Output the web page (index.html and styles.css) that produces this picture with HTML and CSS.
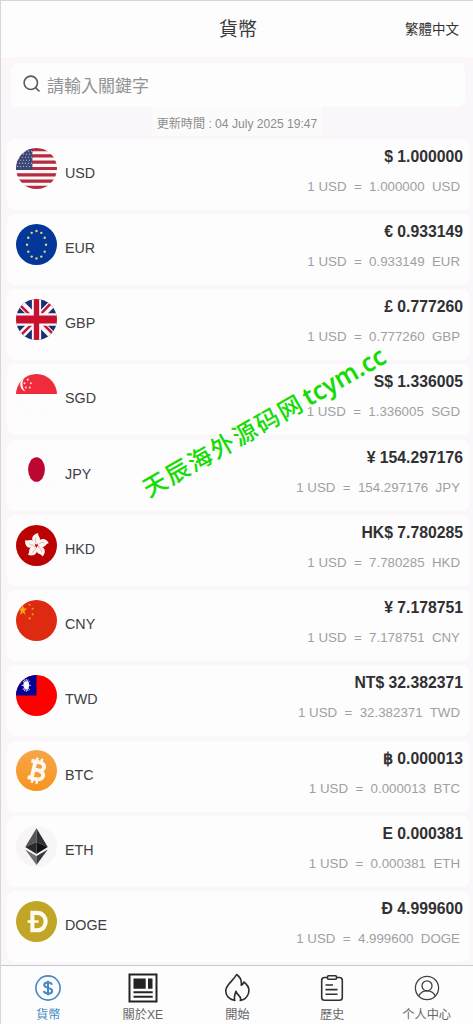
FILE: index.html
```html
<!DOCTYPE html>
<html lang="zh-Hant">
<head>
<meta charset="utf-8">
<title>貨幣</title>
<link rel="stylesheet" href="styles.css">
</head>
<body>
<div class="app">
  <header class="header"><span></span><h1 class="title">貨幣</h1><span class="lang">繁體中文</span></header>
  <main class="content">
    <div class="search">
      <svg class="search-icon" viewBox="0 0 18 18" fill="none" stroke="#5a5a5e" stroke-width="1.6"><circle cx="7.8" cy="7.8" r="6.7"/><path d="M12.5 12.7l4 3.8"/></svg>
      <span>請輸入關鍵字</span>
    </div>
    <div class="updated"><span>更新時間 : 04 July 2025 19:47</span></div>
    <div class="list">
      <div class="card">
        <svg class="flag" viewBox="0 0 40 40"><path fill="#fbf5f6" d="M0 0h40v40H0z"/><path stroke="#b32c42" stroke-width="3.08" d="M0 1.54h40M0 7.7h40M0 13.85h40M0 20h40M0 26.15h40M0 32.3h40M0 38.46h40"/><path fill="#3c4777" d="M0 0h16v21.5H0z"/><path stroke="#aab2cf" stroke-width="1.1" stroke-dasharray="1.1 1.8" d="M0 3h16M1 6h15M0 9h16M1 12h15M0 15h16M1 18h15"/></svg>
        <span class="code">USD</span>
        <div class="rate"><b>$ 1.000000</b><small>1 USD&nbsp; =&nbsp; 1.000000&nbsp; USD</small></div>
      </div>
      <div class="card">
        <svg class="flag" viewBox="0 0 40 40"><path fill="#033799" d="M0 0h40v40H0z"/><g fill="#e6dc72"><circle cx="20" cy="6.8" r="1.15"/><circle cx="24.7" cy="8.6" r="1.15"/><circle cx="28" cy="13.4" r="1.15"/><circle cx="29.3" cy="20.2" r="1.15"/><circle cx="28" cy="27" r="1.15"/><circle cx="24.7" cy="31.8" r="1.15"/><circle cx="20" cy="33.6" r="1.15"/><circle cx="15.3" cy="31.8" r="1.15"/><circle cx="12" cy="27" r="1.15"/><circle cx="10.8" cy="20.2" r="1.15"/><circle cx="12" cy="13.4" r="1.15"/><circle cx="15.3" cy="8.6" r="1.15"/></g></svg>
        <span class="code">EUR</span>
        <div class="rate"><b>€ 0.933149</b><small>1 USD&nbsp; =&nbsp; 0.933149&nbsp; EUR</small></div>
      </div>
      <div class="card">
        <svg class="flag" viewBox="0 0 40 40"><path fill="#17306f" d="M0 0h40v40H0z"/><path stroke="#fcf8fa" stroke-width="7.4" d="M0 0l40 40M40 0L0 40"/><path stroke="#c8163a" stroke-width="2.5" d="M-1 1l18 18M23 21l18 18M39-1L22 17M18 22L0 40"/><path stroke="#fcf8fa" stroke-width="9" d="M20 0v40"/><path stroke="#fcf8fa" stroke-width="12" d="M0 20h40"/><path stroke="#c8102e" stroke-width="5.2" d="M20 0v40"/><path stroke="#c8102e" stroke-width="7.6" d="M0 20h40"/></svg>
        <span class="code">GBP</span>
        <div class="rate"><b>£ 0.777260</b><small>1 USD&nbsp; =&nbsp; 0.777260&nbsp; GBP</small></div>
      </div>
      <div class="card">
        <svg class="flag flag-light" viewBox="0 0 40 40"><path fill="#fdfdfd" d="M0 0h40v40H0z"/><path fill="#ef2c3c" d="M0 0h40v19.6H0z"/><path fill="#fdf5f6" d="M8.500 3.500C2.500 6 2.500 15.500 9.500 17C5.500 14 5.500 7 8.500 3.500z"/><g fill="#fbd5d9"><circle cx="11.500" cy="5.500" r="1"/><circle cx="8.400" cy="9" r="1"/><circle cx="14.500" cy="9" r="1"/><circle cx="9.600" cy="13.200" r="1"/><circle cx="13.500" cy="13.200" r="1"/></g></svg>
        <span class="code">SGD</span>
        <div class="rate"><b>S$ 1.336005</b><small>1 USD&nbsp; =&nbsp; 1.336005&nbsp; SGD</small></div>
      </div>
      <div class="card">
        <svg class="flag flag-light" viewBox="0 0 40 40"><path fill="#fdfdfd" d="M0 0h40v40H0z"/><ellipse cx="20" cy="20" rx="8.2" ry="12" fill="#bc0830"/></svg>
        <span class="code">JPY</span>
        <div class="rate"><b>¥ 154.297176</b><small>1 USD&nbsp; =&nbsp; 154.297176&nbsp; JPY</small></div>
      </div>
      <div class="card">
        <svg class="flag" viewBox="0 0 40 40"><defs><g id="petal"><path fill="#fdf5f4" d="M20 19C13.500 16 14.800 9 21.800 7.800C20.400 10 25 12.600 23 16C22.100 17.600 20.800 18 20 19z"/><path d="M19.700 17.500C18.400 15.500 18.600 13.500 19.600 12" fill="none" stroke="#d98078" stroke-width=".5"/></g></defs><path fill="#ba0202" d="M0 0h40v40H0z"/><use href="#petal"/><use href="#petal" transform="rotate(72 20 20)"/><use href="#petal" transform="rotate(144 20 20)"/><use href="#petal" transform="rotate(216 20 20)"/><use href="#petal" transform="rotate(288 20 20)"/></svg>
        <span class="code">HKD</span>
        <div class="rate"><b>HK$ 7.780285</b><small>1 USD&nbsp; =&nbsp; 7.780285&nbsp; HKD</small></div>
      </div>
      <div class="card">
        <svg class="flag" viewBox="0 0 40 40"><path fill="#de2a10" d="M0 0h40v40H0z"/><path fill="#f8a51b" d="M6.600 4.500l1.100 3.800h3l-2.400 2.400 1 4-2.700-2.400-2.800 2.400 1-4-2.400-2.400h3.100z"/><g fill="#eda01a"><circle cx="13.300" cy="4.600" r="1"/><circle cx="16.200" cy="8.600" r="1"/><circle cx="16.200" cy="14" r="1"/><circle cx="13.300" cy="18" r="1.100"/></g></svg>
        <span class="code">CNY</span>
        <div class="rate"><b>¥ 7.178751</b><small>1 USD&nbsp; =&nbsp; 7.178751&nbsp; CNY</small></div>
      </div>
      <div class="card">
        <svg class="flag" viewBox="0 0 40 40"><path fill="#fe0000" d="M0 0h40v40H0z"/><path fill="#000094" d="M0 0h20v20H0z"/><path stroke="#dde" stroke-width=".9" d="M10 3.800v12.600M5.400 10h9.200M6.700 5.700l6.600 8.800M13.300 5.700l-6.600 8.800M8.200 4.400l3.600 11.300M11.800 4.400L8.200 15.700"/><ellipse cx="10" cy="10" rx="2.800" ry="3.600" fill="#fff"/></svg>
        <span class="code">TWD</span>
        <div class="rate"><b>NT$ 32.382371</b><small>1 USD&nbsp; =&nbsp; 32.382371&nbsp; TWD</small></div>
      </div>
      <div class="card">
        <svg class="flag" viewBox="0 0 40 40"><defs><linearGradient id="gold" x2="0" y2="1"><stop stop-color="#f6a64a"/><stop offset="1" stop-color="#f7941d"/></linearGradient></defs><path fill="url(#gold)" d="M0 0h40v40H0z"/><g transform="rotate(13 20 20)" fill="none" stroke="#fff8f2"><path stroke-width="3.800" d="M13 11.700h8.800c6.200 0 6.200 7.800 0 7.800H17M21.500 19.500c8 0 8 8.800 0 8.800H13M17 12v16"/><path stroke-width="2.400" d="M18.200 7.500V12M22.800 7.500V12M18.200 28v4.700M22.800 28v4.700"/></g></svg>
        <span class="code">BTC</span>
        <div class="rate"><b>฿ 0.000013</b><small>1 USD&nbsp; =&nbsp; 0.000013&nbsp; BTC</small></div>
      </div>
      <div class="card">
        <svg class="flag" viewBox="0 0 40 40"><path fill="#f8f5f7" d="M0 0h40v40H0z"/><path fill="#56565a" d="M20 2.200L9 20.600l11-5z"/><path fill="#303033" d="M20 2.200l11 18.400-11-5z"/><path fill="#29292c" d="M9 20.600l11-5v11.600z"/><path fill="#111114" d="M31 20.600l-11-5v11.600z"/><path fill="#707074" d="M9 23l11 6.200V38z"/><path fill="#39393d" d="M31 23l-11 6.200V38z"/></svg>
        <span class="code">ETH</span>
        <div class="rate"><b>E 0.000381</b><small>1 USD&nbsp; =&nbsp; 0.000381&nbsp; ETH</small></div>
      </div>
      <div class="card">
        <svg class="flag" viewBox="0 0 40 40"><path fill="#c1a526" d="M0 0h40v40H0z"/><g fill="none" stroke="#fffcef"><path stroke-width="4" d="M16 11.600h4.500c11.300 0 11.300 17 0 17H16zM16 9.600v21"/><path stroke-width="2.300" d="M11.300 20H22"/></g></svg>
        <span class="code">DOGE</span>
        <div class="rate"><b>Đ 4.999600</b><small>1 USD&nbsp; =&nbsp; 4.999600&nbsp; DOGE</small></div>
      </div>
    </div>
  </main>
  <nav class="tabs">
    <a class="tab active"><svg viewBox="0 0 30 30" fill="none" stroke="currentColor" stroke-width="1.6"><circle cx="15" cy="15" r="12.1"/><path stroke-width="2" d="M19 11.700c-.8-3-7.800-2.900-7.800.4 0 3.600 8 2 8 5.800 0 3.600-7.600 3.500-8.400.2M15 7.800v14.400"/></svg><span>貨幣</span></a>
    <a class="tab"><svg viewBox="0 0 30 30" fill="none" stroke="#242426" stroke-width="2"><path d="M1.500 1.500h27v27h-27z"/><path fill="#242426" stroke="none" d="M5.500 5.500h12.200v10.200H5.500zM20 5.500h4.500v10.200H20z"/><path d="M5.500 19.300h19.200M5.500 23.800h19.200"/></svg><span>關於XE</span></a>
    <a class="tab"><svg viewBox="0 0 30 30" fill="none" stroke="#2d2d2f" stroke-width="1.6" stroke-linejoin="round"><path d="M12.800 27.500C6.500 26.500 3.500 22 3.800 17.200C4.200 11.500 11.500 7.600 14.600 1.500C18.500 4.200 20 7.200 19.200 12.200C20.800 11.500 21.500 10.200 21.800 9C26.500 12.500 28 17.300 25.800 22C24.500 25 22 26.800 18.300 27.500C20.500 23.500 15 22.500 14 18.200C12.800 21.500 11.600 24 12.800 27.500z"/></svg><span>開始</span></a>
    <a class="tab"><svg viewBox="0 0 30 30" fill="none" stroke="#303033" stroke-width="1.6"><path d="M10 4.500H7.500Q4.700 4.500 4.700 7.300v17.200q0 2.800 2.800 2.800h15q2.800 0 2.800-2.800V7.300q0-2.800-2.800-2.800H20"/><rect x="10.500" y="2.700" width="9" height="3.600" rx="1"/><path d="M8.500 12h7.500M8.500 16.600h12M8.500 21.300h12"/></svg><span>歷史</span></a>
    <a class="tab"><svg viewBox="0 0 30 30" fill="none" stroke="#404043" stroke-width="1.3"><circle cx="15" cy="15" r="11.600"/><circle cx="15" cy="12.800" r="5"/><path d="M6.800 23.100c1.400-3.700 4.200-5.300 8.200-5.300s6.800 1.600 8.200 5.300"/></svg><span>个人中心</span></a>
  </nav>
  <svg class="watermark" viewBox="0 0 473 1024"><g transform="translate(149 498) rotate(-29.7)"><text x="0" y="0" textLength="179" lengthAdjust="spacing">天辰海外源码网</text><text class="domain" x="184" y="0" textLength="91" lengthAdjust="spacingAndGlyphs">tcym.cc</text></g></svg>
</div>
</body>
</html>
```
FILE: styles.css
```css
* { box-sizing: border-box; }
body { margin: 0; font-family: "Liberation Sans", "Noto Sans CJK TC", sans-serif; }
.app {
  position: relative;
  display: flex;
  flex-direction: column;
  height: 1024px;
  overflow: hidden;
  background: #faf6f9;
  border-top: 1px solid #d6d6d6;
  border-left: 1px solid #d6d6d6;
}
.header {
  display: grid;
  grid-template-columns: 1fr auto 1fr;
  align-items: center;
  height: 56px;
  flex: none;
  padding: 0 14px 3px 16px;
  background: #fdfdfd;
  color: #3a3a3a;
}
.title { margin: 0; font-size: 19px; font-weight: 400; }
.lang { justify-self: end; font-size: 13.5px; color: #333; }
.content { flex: 1; min-height: 0; overflow: hidden; padding-top: 6px; }
.search {
  display: flex;
  align-items: center;
  gap: 6px;
  height: 44px;
  margin: 0 8px 0 10px;
  padding: 0 0 2px 12px;
  border-radius: 7px;
  background: #fdfdfd;
  color: #929295;
  font-size: 17px;
}
.search-icon { width: 18px; height: 18px; }
.updated { height: 31.7px; text-align: center; color: #8d8d8d; font-size: 12.1px; }
.updated span { display: inline-block; height: 29px; padding: 0 5px; line-height: 34px; background: #fcfbfb; }
.list { display: flex; flex-direction: column; gap: 4.4px; padding: 0 3px 0 6px; }
.card {
  display: flex;
  align-items: flex-start;
  flex: none;
  height: 70.87px;
  padding: 9px 7px 0 9px;
  border-radius: 8px;
  background: #fdfdfd;
}
.flag { width: 41px; height: 41px; margin-top: .7px; border-radius: 50%; flex: none; }
.flag-light { box-shadow: 0 0 1px #e9e4e8; }
.code { margin: 17px 0 0 8px; color: #404043; font-size: 14.3px; line-height: 16px; }
.rate { display: flex; flex-direction: column; align-items: flex-end; margin-left: auto; white-space: nowrap; }
.rate b { color: #303033; font-size: 15.75px; line-height: 18px; }
.rate small { margin: 13px 3px 0 0; color: #a0a0a2; font-size: 13.3px; line-height: 16px; }
.tabs {
  display: grid;
  grid-template-columns: repeat(5, 1fr);
  flex: none;
  height: 59px;
  margin-right: -1px;
  padding-top: 7px;
  border-top: 1px solid #cacaca;
  background: #fdfdfd;
}
.tab { display: flex; flex-direction: column; align-items: center; color: #666; font-size: 12.2px; line-height: 18px; }
.tab svg { width: 30px; height: 30px; margin-bottom: 3px; }
.active { color: #4389c5; }
.watermark { position: absolute; left: -1px; top: -1px; width: 473px; height: 1024px; pointer-events: none; fill: #15dc05; }
.watermark text { font: 500 24px "Noto Sans CJK SC", sans-serif; }
.watermark .domain { font: 600 26px "Noto Sans", "Noto Sans CJK SC", sans-serif; }
```
